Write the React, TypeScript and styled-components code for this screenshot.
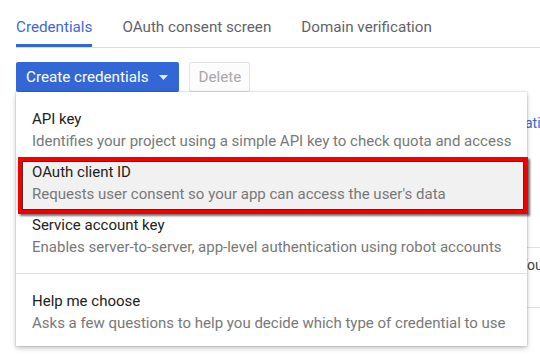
import React from "react";
import styled, { createGlobalStyle } from "styled-components";

const GlobalStyle = createGlobalStyle`
  html, body { margin: 0; padding: 0; background: #ffffff; }
  body { font-family: Roboto, "Liberation Sans", Arial, sans-serif; -webkit-font-smoothing: antialiased; }
  * { box-sizing: border-box; }
`;

const Page = styled.div`
  position: relative;
  width: 540px;
  height: 362px;
  overflow: hidden;
  background: #fff;
`;

const TabBar = styled.nav`
  display: flex;
  gap: 30px;
  margin-left: 16px;
  border-bottom: 1px solid #dadce0;
`;

const Tab = styled.div<{ $active?: boolean }>`
  height: 47px;
  padding-top: 17px;
  font-size: 15.2px;
  line-height: 20px;
  color: ${(p) => (p.$active ? "#3f66d5" : "#5f6368")};
  border-bottom: 3px solid ${(p) => (p.$active ? "#3367d6" : "transparent")};
  white-space: nowrap;
`;

const ButtonRow = styled.div`
  display: flex;
  gap: 10px;
  margin: 14px 0 0 16px;
`;

const PrimaryButton = styled.button`
  display: flex;
  align-items: center;
  gap: 11px;
  height: 30px;
  padding: 0 11px 0 10px;
  border: none;
  border-radius: 2px;
  background: #3367d6;
  color: #fff;
  font-family: inherit;
  font-size: 15.2px;
  font-weight: 400;
  box-shadow: 0 1px 1px rgba(0, 0, 0, 0.15);
`;

const GhostButton = styled.button`
  height: 30px;
  width: 61px;
  padding: 0;
  border: 1px solid #e3e3e3;
  border-radius: 2px;
  background: #fcfcfc;
  color: #a8a8a8;
  font-family: inherit;
  font-size: 15.2px;
`;

const Intro = styled.div`
  display: grid;
  grid-template-columns: 446px auto;
  margin: 21px 0 0 16px;
  font-size: 14px;
  line-height: 20px;
  white-space: nowrap;
  color: #5f6368;
  overflow: hidden;
`;

const Link = styled.span`
  color: #3367d6;
`;

const Table = styled.div`
  margin-top: 114px;
  margin-left: 16px;
  border-top: 1px solid #e0e0e0;
`;

const TableRow = styled.div`
  display: grid;
  grid-template-columns: 503px auto;
  height: 60px;
  padding-top: 7px;
  border-bottom: 1px solid #e0e0e0;
  font-size: 14px;
  line-height: 20px;
  color: #3c4043;
  white-space: nowrap;
  overflow: hidden;
`;

const Menu = styled.div`
  position: absolute;
  top: 92px;
  left: 16px;
  width: 511px;
  height: 254px;
  padding-top: 12px;
  background: #fff;
  box-shadow: 0 2px 5px rgba(0, 0, 0, 0.26), 0 0 0 1px rgba(0, 0, 0, 0.06);
`;

const Item = styled.div<{ $active?: boolean }>`
  position: relative;
  height: 53px;
  padding: 5px 16px 0;
  background: ${(p) => (p.$active ? "#f1f1f1" : "transparent")};
`;

const ItemTitle = styled.div`
  font-size: 15px;
  line-height: 21px;
  color: #212121;
`;

const ItemDesc = styled.div`
  font-size: 15px;
  line-height: 22px;
  color: #787878;
  white-space: nowrap;
`;

const Divider = styled.hr`
  margin: 10px 0 12px;
  border: none;
  border-top: 1px solid #e0e0e0;
`;

const Highlight = styled.div`
  position: absolute;
  top: 0;
  left: 2px;
  right: -1px;
  bottom: -4px;
  border: 4px solid #f20000;
  box-shadow: inset 0 0 0 1px #5a2a2a, 2px 2px 2px rgba(0, 0, 0, 0.55);
  pointer-events: none;
`;

const Caret = () => (
  <svg width="9" height="5" viewBox="0 0 9 5" aria-hidden="true">
    <path d="M0 0 L9 0 L4.5 5 Z" fill="rgba(255,255,255,0.85)" />
  </svg>
);

const items = [
  { title: "API key", desc: "Identifies your project using a simple API key to check quota and access" },
  { title: "OAuth client ID", desc: "Requests user consent so your app can access the user's data", active: true },
  { title: "Service account key", desc: "Enables server-to-server, app-level authentication using robot accounts" },
];

export default function App() {
  return (
    <Page>
      <GlobalStyle />
      <TabBar>
        <Tab $active>Credentials</Tab>
        <Tab>OAuth consent screen</Tab>
        <Tab>Domain verification</Tab>
      </TabBar>
      <ButtonRow>
        <PrimaryButton>
          Create credentials
          <Caret />
        </PrimaryButton>
        <GhostButton disabled>Delete</GhostButton>
      </ButtonRow>
      <Intro>
        <span>Create credentials to access your enabled APIs. Refer to the API</span>
        <Link>documentation for details.</Link>
      </Intro>
      <Table>
        <TableRow>
          <span>Name</span>
          <span>Your client</span>
        </TableRow>
      </Table>
      <Menu>
        {items.map((it) => (
          <Item key={it.title} $active={it.active}>
            <ItemTitle>{it.title}</ItemTitle>
            <ItemDesc>{it.desc}</ItemDesc>
            {it.active && <Highlight />}
          </Item>
        ))}
        <Divider />
        <Item>
          <ItemTitle>Help me choose</ItemTitle>
          <ItemDesc>Asks a few questions to help you decide which type of credential to use</ItemDesc>
        </Item>
      </Menu>
    </Page>
  );
}
